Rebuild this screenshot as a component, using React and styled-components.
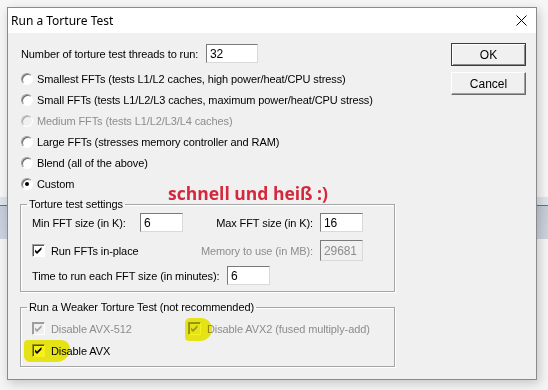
import React from "react";
import styled, { createGlobalStyle } from "styled-components";

const GlobalStyle = createGlobalStyle`
  html, body {
    margin: 0;
    padding: 0;
  }
  body {
    font-family: "Liberation Sans", Arial, sans-serif;
    font-size: 11px;
    letter-spacing: -0.1px;
    color: #000;
  }
`;

const Desktop = styled.div`
  width: 548px;
  height: 390px;
  box-sizing: border-box;
  padding: 7px 0 0 7px;
  overflow: hidden;
  background: linear-gradient(
    to bottom,
    #f6f6f6 0,
    #f6f6f6 197px,
    #dde3ea 197px,
    #dde3ea 205px,
    #6b7079 205px,
    #6b7079 206px,
    #c4ccd8 206px,
    #ccd3de 239px,
    #f4f4f4 239px
  );
`;

const Window = styled.div`
  position: relative;
  width: 530px;
  height: 373px;
  box-sizing: border-box;
  border: 1px solid #8a8a8a;
  background: #f0f0f0;
  box-shadow: 2px 3px 10px rgba(0, 0, 0, 0.2);
  display: flex;
  flex-direction: column;
`;

const TitleBar = styled.div`
  height: 25px;
  flex: none;
  background: #fff;
  display: flex;
  align-items: center;
  justify-content: space-between;
  padding: 0 9px 0 3px;
  font-family: "Noto Sans", "Open Sans", sans-serif;
  font-size: 12px;
  letter-spacing: 0;
`;

const Client = styled.div`
  flex: 1;
  display: flex;
  justify-content: space-between;
  padding: 10px 10px 0 12px;
`;

const LeftColumn = styled.div`
  width: 375px;
  display: flex;
  flex-direction: column;
`;

const ThreadsRow = styled.div`
  display: flex;
  align-items: center;
  height: 19px;
  margin-top: 1px;
  padding-left: 1px;
`;

const FieldLabel = styled.span`
  width: ${(p) => p.$width}px;
  flex: none;
  white-space: nowrap;
  color: ${(p) => (p.$disabled ? "#8d8d8d" : "#000")};
  text-align: ${(p) => (p.$right ? "right" : "left")};
  padding-right: ${(p) => (p.$right ? 7 : 0)}px;
  box-sizing: border-box;
`;

const TextBox = styled.div`
  width: ${(p) => p.$width || 43}px;
  height: ${(p) => p.$height || 19}px;
  box-sizing: border-box;
  border: 1px solid;
  border-color: #7a7a7a #d9d9d9 #d9d9d9 #7a7a7a;
  background: ${(p) => (p.$disabled ? "#f0f0f0" : "#fff")};
  color: ${(p) => (p.$disabled ? "#8d8d8d" : "#000")};
  padding-left: 3px;
  display: flex;
  align-items: center;
  font-size: 12px;
`;

const RadioList = styled.div`
  margin-top: 5px;
  display: flex;
  flex-direction: column;
`;

const OptionRow = styled.label`
  height: 21px;
  display: flex;
  align-items: center;
  gap: ${(p) => p.$gap ?? 4}px;
  padding-left: 1px;
  white-space: nowrap;
  color: ${(p) => (p.$disabled ? "#8d8d8d" : "#000")};
`;

const RadioCircle = styled.span`
  width: 12px;
  height: 12px;
  box-sizing: border-box;
  flex: none;
  border-radius: 50%;
  border: 1px solid;
  border-color: ${(p) =>
    p.$disabled ? "#c4c4c4 #fff #fff #c4c4c4" : "#9a9a9a #fff #fff #9a9a9a"};
  box-shadow: inset 1px 1px 0 ${(p) => (p.$disabled ? "#a8a8a8" : "#696969")};
  background: ${(p) => (p.$disabled ? "#f0f0f0" : "#fff")};
  display: flex;
  align-items: center;
  justify-content: center;

  &::after {
    content: "";
    width: 4px;
    height: 4px;
    border-radius: 50%;
    background: #000;
    display: ${(p) => (p.$checked ? "block" : "none")};
  }
`;

const CheckSquare = styled.span`
  width: 13px;
  height: 13px;
  box-sizing: border-box;
  flex: none;
  margin-left: -1px;
  border: 1px solid;
  border-color: #a0a0a0 #fff #fff #a0a0a0;
  box-shadow: inset 1px 1px 0 ${(p) => (p.$disabled ? "#9a9a9a" : "#555")};
  background: ${(p) => (p.$disabled ? "#f0f0f0" : "#fff")};
  display: flex;
  align-items: center;
  justify-content: center;
`;

const Group = styled.fieldset`
  margin: ${(p) => p.$top}px 0 0 0;
  padding: ${(p) => p.$padTop}px 10px ${(p) => p.$padBottom}px 11px;
  border: 1px solid #a6a6a6;
  box-shadow: inset 1px 1px 0 #fff, 1px 1px 0 #fff;
  min-width: 0;
  width: 375px;
  box-sizing: border-box;
`;

const Legend = styled.legend`
  padding: 0 2px;
  margin-left: -5px;
  font-size: 11px;
  line-height: 13px;
`;

const SizeGrid = styled.div`
  display: grid;
  grid-template-columns: 108px 43px 137px 43px;
  grid-auto-rows: 21px;
  row-gap: 7px;
  align-items: center;
`;

const SpanCell = styled.div`
  grid-column: span 2;
`;

const TimeRow = styled.div`
  margin-top: 4px;
  height: 21px;
  display: flex;
  align-items: center;
`;

const WeakGrid = styled.div`
  display: grid;
  grid-template-columns: 156px 1fr;
  grid-auto-rows: 21px;
  row-gap: 1px;
  align-items: center;
`;

const ButtonColumn = styled.div`
  width: 75px;
  display: flex;
  flex-direction: column;
  gap: 6px;
`;

const DialogButton = styled.button`
  width: 75px;
  height: 23px;
  box-sizing: border-box;
  padding: 0;
  font-family: "Liberation Sans", Arial, sans-serif;
  font-size: 12px;
  color: #000;
  background: #f0f0f0;
  border: 1px solid;
  border-color: ${(p) =>
    p.$default ? "#3c3c3c" : "#fff #6b6b6b #6b6b6b #fff"};
  box-shadow: ${(p) =>
    p.$default
      ? "inset 1px 1px 0 #fff, inset -1px -1px 0 #8a8a8a"
      : "inset -1px -1px 0 #a0a0a0"};
`;

const Annotation = styled.div`
  position: absolute;
  left: 160px;
  top: 175px;
  font-family: "Open Sans", "Noto Sans", sans-serif;
  font-weight: 700;
  font-size: 17.5px;
  line-height: 20px;
  letter-spacing: 0;
  color: #d4283d;
  white-space: nowrap;
`;

const Highlight = styled.div`
  position: absolute;
  background: #f4f000;
  mix-blend-mode: multiply;
  opacity: 0.9;
`;

function CloseIcon() {
  return (
    <svg width="11" height="11" viewBox="0 0 11 11">
      <path d="M0.5 0.5 L10.5 10.5 M10.5 0.5 L0.5 10.5" stroke="#000" strokeWidth="1" />
    </svg>
  );
}

function Checkbox({ checked, disabled }) {
  return (
    <CheckSquare $disabled={disabled}>
      {checked && (
        <svg width="9" height="9" viewBox="0 0 9 9">
          <path
            d="M1 3.5 L3 5.5 L7.5 1 L7.5 3.5 L3 8 L1 6 Z"
            fill={disabled ? "#a0a0a0" : "#000"}
          />
        </svg>
      )}
    </CheckSquare>
  );
}

function Radio({ label, checked, disabled }) {
  return (
    <OptionRow $disabled={disabled}>
      <RadioCircle $checked={checked} $disabled={disabled} />
      {label}
    </OptionRow>
  );
}

function CheckOption({ label, checked, disabled }) {
  return (
    <OptionRow $gap={6} $disabled={disabled}>
      <Checkbox checked={checked} disabled={disabled} />
      {label}
    </OptionRow>
  );
}

const radios = [
  { label: "Smallest FFTs (tests L1/L2 caches, high power/heat/CPU stress)" },
  { label: "Small FFTs (tests L1/L2/L3 caches, maximum power/heat/CPU stress)" },
  { label: "Medium FFTs (tests L1/L2/L3/L4 caches)", disabled: true },
  { label: "Large FFTs (stresses memory controller and RAM)" },
  { label: "Blend (all of the above)" },
  { label: "Custom", checked: true },
];

export default function App() {
  return (
    <>
      <GlobalStyle />
      <Desktop>
        <Window>
          <TitleBar>
            <span>Run a Torture Test</span>
            <CloseIcon />
          </TitleBar>
          <Client>
            <LeftColumn>
              <ThreadsRow>
                <FieldLabel $width={185}>Number of torture test threads to run:</FieldLabel>
                <TextBox $width={52}>32</TextBox>
              </ThreadsRow>
              <RadioList>
                {radios.map((r) => (
                  <Radio key={r.label} {...r} />
                ))}
              </RadioList>
              <Group $top={4} $padTop={1} $padBottom={5}>
                <Legend>Torture test settings</Legend>
                <SizeGrid>
                  <FieldLabel $width={108}>Min FFT size (in K):</FieldLabel>
                  <TextBox>6</TextBox>
                  <FieldLabel $width={137} $right>Max FFT size (in K):</FieldLabel>
                  <TextBox>16</TextBox>
                  <SpanCell>
                    <CheckOption label="Run FFTs in-place" checked />
                  </SpanCell>
                  <FieldLabel $width={137} $right $disabled>Memory to use (in MB):</FieldLabel>
                  <TextBox $height={21} $disabled>29681</TextBox>
                </SizeGrid>
                <TimeRow>
                  <FieldLabel $width={195}>Time to run each FFT size (in minutes):</FieldLabel>
                  <TextBox>6</TextBox>
                </TimeRow>
              </Group>
              <Group $top={9} $padTop={4} $padBottom={5}>
                <Legend>Run a Weaker Torture Test (not recommended)</Legend>
                <WeakGrid>
                  <CheckOption label="Disable AVX-512" checked disabled />
                  <CheckOption label="Disable AVX2 (fused multiply-add)" checked disabled />
                  <CheckOption label="Disable AVX" checked />
                </WeakGrid>
              </Group>
            </LeftColumn>
            <ButtonColumn>
              <DialogButton $default>OK</DialogButton>
              <DialogButton>Cancel</DialogButton>
            </ButtonColumn>
          </Client>
          <Annotation>schnell und heiß :)</Annotation>
          <Highlight
            style={{ left: 177, top: 310, width: 27, height: 23, borderRadius: "5px 11px 12px 4px" }}
          />
          <Highlight
            style={{ left: 16, top: 332, width: 46, height: 22, borderRadius: "4px 9px 14px 6px" }}
          />
        </Window>
      </Desktop>
    </>
  );
}
